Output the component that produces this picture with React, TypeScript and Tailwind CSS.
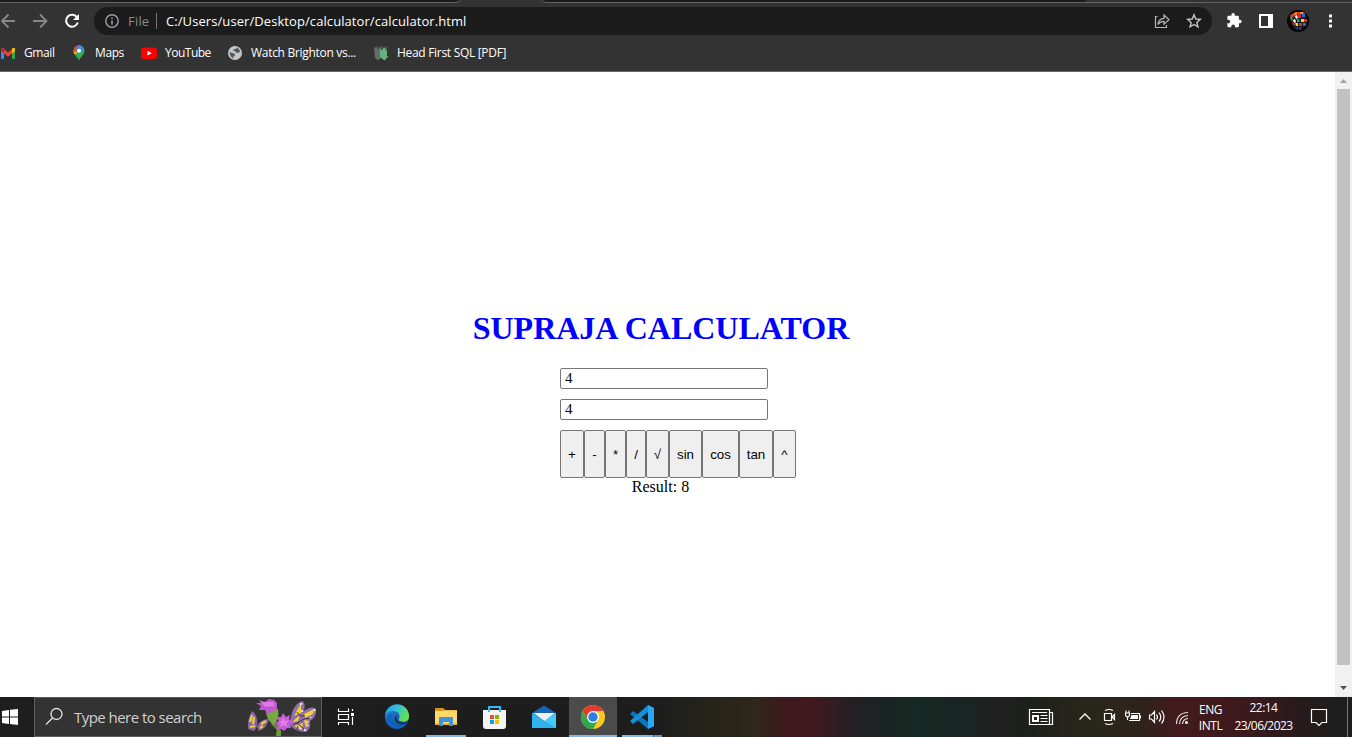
import type { ReactNode } from 'react';

const ui = "font-['Open_Sans','Noto_Sans',sans-serif]";

function Ico({ w, h, className = '', children }: { w: number; h: number; className?: string; children: ReactNode }) {
  return (
    <svg width={w} height={h} viewBox={`0 0 ${w} ${h}`} fill="none" className={`shrink-0 ${className}`}>
      {children}
    </svg>
  );
}

function TabStrip() {
  return (
    <div className="flex h-[5px] shrink-0 bg-[#333333]">
      <Ico w={1352} h={5}>
        <path d="M0 0H460Q459 2 456 2H0Z" fill="#1c1c1c" />
        <path d="M542 0H1087Q1086 2 1083 2H547Q543 2 542 0Z" fill="#1c1c1c" />
        <path d="M0 2.5H455Q459 2.500 460 0M542 0Q543 2.500 547 2.500H1352" stroke="#626262" />
      </Ico>
    </div>
  );
}

function Toolbar() {
  return (
    <div className="flex h-8 shrink-0 items-center">
      <Ico w={94} h={32}>
        <path d="M15 16H2.500M8.500 9.500L2 16L8.500 22.500" stroke="#888888" strokeWidth="1.800" />
        <path d="M33 16H46M40 9.500L46.500 16L40 22.500" stroke="#888888" strokeWidth="1.800" />
        <path d="M77.200 12.600A6 6 0 1 0 77.800 17.500" stroke="#fff" strokeWidth="2" />
        <path d="M79 9V15H73Z" fill="#fff" />
      </Ico>
      <div className="flex h-7 w-[1118px] shrink-0 items-center rounded-full bg-[#1b1b1b] pl-[11px] pr-[10px]">
        <Ico w={14} h={14}>
          <circle cx="7" cy="7" r="6.200" stroke="#9aa0a6" strokeWidth="1.400" />
          <path d="M7 6.200V10.500M7 3.500V5" stroke="#9aa0a6" strokeWidth="1.500" />
        </Ico>
        <span className="ml-[9px] w-[28px] whitespace-nowrap pt-px text-[13px] tracking-[0.2px] text-[#8b8b8b]">File</span>
        <div className="h-4 w-px bg-[#777]" />
        <span className="ml-[9px] flex-1 whitespace-nowrap pt-px text-[13px] tracking-[0.08px] text-white">C:/Users/user/Desktop/calculator/calculator.html</span>
        <Ico w={16} h={16} className="mr-4">
          <path d="M3.500 3.500H1.500V14.500H12.500V12" stroke="#b5b5b5" strokeWidth="1.200" />
          <path d="M4 11.500C4.500 7.500 7 5.500 10 5.400V2L15 6.800L10 11.200V8.300C7.500 8.300 5.500 9.300 4 11.500Z" stroke="#b5b5b5" strokeWidth="1.200" />
        </Ico>
        <Ico w={16} h={16}>
          <path d="M8 1.800L9.800 6L14.300 6.400L10.900 9.400L11.900 13.800L8 11.500L4.100 13.800L5.100 9.400L1.700 6.400L6.200 6Z" stroke="#c8c8c8" strokeWidth="1.400" />
        </Ico>
      </div>
      <Ico w={140} h={32}>
        <g transform="translate(14 7.300) scale(.68)">
          <path d="M20.500 11H19V7c0-1.100-.9-2-2-2h-4V3.500a2.500 2.500 0 0 0-5 0V5H4c-1.100 0-2 .9-2 2v3.800h1.500a2.700 2.700 0 0 1 0 5.400H2V20c0 1.100.9 2 2 2h3.800v-1.500a2.700 2.700 0 0 1 5.400 0V22H17c1.100 0 2-.9 2-2v-4h1.500a2.500 2.500 0 0 0 0-5z" fill="#fff" />
        </g>
        <path d="M47 9H61V23H47ZM49 11V21H56V11Z" fill="#fff" fillRule="evenodd" />
        <circle cx="86" cy="16" r="11" fill="#050505" />
        <g transform="translate(86 16)">
          <path d="M-8 -4L0 -8L7 -7L9 4L2 9L-5 7Z" fill="#1a1a1a" />
          <path d="M-8 -6L-2 -9L6 -9L7 -7L-1 -6L-7 -3Z" fill="#e8352c" />
          <path d="M-4 -8L-1 -9V-7L-4 -6ZM2 -9H5V-7H2Z" fill="#f08a1f" />
          <path d="M-3 -5L-1 -6L0 -3L-2 -2ZM-5 -1L-3 -2L-2 1L-4 2Z" fill="#fff" />
          <path d="M-8 -4L-6 -5L-5 -1L-7 0ZM-1 -2L1 -2L2 1L-1 1Z" fill="#20a455" />
          <path d="M0 -6H3V-3H0ZM-6 1L-4 2L-3 5L-5 4ZM6 -2H9V1H6ZM1 2H4V5H1Z" fill="#e8252c" />
          <path d="M3 -2H6V1H3ZM-3 2L0 2V5L-2 5Z" fill="#ffd21f" />
          <path d="M4 -7H7V-4H4ZM5 2H8V5H5Z" fill="#2469dc" />
          <path d="M-3 6H0V9L-2 8ZM1 6H4L3 9H1Z" fill="#163f86" />
        </g>
        <path d="M117 9.500H120V12.500H117ZM117 14.500H120V17.500H117ZM117 19.500H120V22.500H117Z" fill="#fff" />
      </Ico>
    </div>
  );
}

function Bookmarks() {
  const label = 'whitespace-nowrap pb-px text-[12px] text-white';
  return (
    <div className="flex h-[35px] shrink-0 items-center border-b border-[#6a6a6a] pb-[2px]">
      <Ico w={16} h={16}>
        <path d="M1 3H4V14H2Q1 14 1 13Z" fill="#4285f4" />
        <path d="M12 3H15V13Q15 14 14 14H12Z" fill="#34a853" />
        <path d="M4 4L8 7.500L12 4V8.500L8 11.800L4 8.500Z" fill="#ea4335" />
        <path d="M1 3.500Q2.500 2 4 4V8.500L1 6Z" fill="#c5221f" />
        <path d="M15 3.500Q13.500 2 12 4V8.500L15 6Z" fill="#fbbc04" />
      </Ico>
      <span className={`ml-2 w-[47px] tracking-[-0.4px] ${label}`}>Gmail</span>
      <Ico w={16} h={16}>
        <path d="M8 16C7.500 12.500 2.500 10.500 2.500 5.800A5.500 5.500 0 0 1 13.500 5.800C13.500 10.500 8.500 12.500 8 16Z" fill="#34a853" />
        <path d="M4 9.800Q2.500 8 2.500 5.800L4 2.300L8.500 4.600Z" fill="#fbbc04" />
        <path d="M3.200 3.300Q4.500 1.200 6.400.6L8.500 3.500L4.500 7.500Q2 6 3.200 3.300Z" fill="#ea4335" />
        <path d="M6.200.7Q10.500-.8 13 3.500L8.500 8.500L5 5.500Z" fill="#4285f4" />
        <circle cx="8" cy="5.700" r="2" fill="#fff" />
      </Ico>
      <span className={`ml-2 w-[46px] tracking-[-0.4px] ${label}`}>Maps</span>
      <Ico w={16} h={16}>
        <rect x="0" y="2.500" width="16" height="11.500" rx="3" fill="#ff0000" />
        <path d="M6.500 5.800L10.800 8.200L6.500 10.600Z" fill="#fff" />
      </Ico>
      <span className={`ml-2 w-[62px] tracking-[-0.5px] ${label}`}>YouTube</span>
      <Ico w={16} h={16}>
        <circle cx="8" cy="8" r="7" fill="#c4c7ca" />
        <path d="M9.500 2.500Q12.500 3.500 13.200 6.500L11 8L9 7.500L8 6L6 5.500L7 4L9 4ZM2.500 7L5 8L7.500 8.500L8 10.500L6.500 11.500V13.500Q3 12 2.500 7Z" fill="#55595d" />
      </Ico>
      <span className={`ml-2 w-[122px] tracking-[-0.3px] ${label}`}>Watch Brighton vs...</span>
      <Ico w={16} h={16}>
        <path d="M1 3L3 2L5 4L8 1V13L5 15.500L1 12H2Z" fill="#696969" />
        <path d="M7 4L9 5L11 2L13 4L14 3V11H15.500L11.500 15.500L7 12Z" fill="#61b57c" />
        <path d="M4.500 1V5M9 .5V5M13.500 1V6" stroke="#4a5f52" strokeWidth="1.300" />
      </Ico>
      <span className={`ml-2 tracking-[-0.3px] ${label}`}>Head First SQL [PDF]</span>
    </div>
  );
}

const keys: [string, string][] = [
  ['+', 'w-6'],
  ['-', 'w-[21px]'],
  ['*', 'w-[21px]'],
  ['/', 'w-5'],
  ['√', 'w-[23px]'],
  ['sin', 'w-[33px]'],
  ['cos', 'w-[37px]'],
  ['tan', 'w-[34px]'],
  ['^', 'w-[23px]'],
];

function Calculator() {
  const field = "h-[21px] w-[208px] rounded-[2px] border border-[#767676] bg-white px-[4px] font-['Liberation_Serif',serif] text-[15px] leading-[19px] text-black outline-none";
  return (
    <main className="flex flex-1 flex-col bg-white pt-[238px] font-['Liberation_Serif',serif] text-black">
      <h1 className="w-[1322px] text-center text-[32px] font-bold leading-[37px] text-[#0000ff]">SUPRAJA CALCULATOR</h1>
      <div className="mt-[21px] flex flex-col gap-[10px] pl-[560px]">
        <input className={field} defaultValue="4" />
        <input className={field} defaultValue="4" />
        <div className="flex">
          {keys.map(([k, w]) => (
            <button key={k} className={`${w} flex h-12 shrink-0 items-center justify-center rounded-[2px] border border-[#767676] bg-[#efefef] pt-[2px] font-['Liberation_Sans',sans-serif] text-[13.333px]`}>
              {k}
            </button>
          ))}
        </div>
      </div>
      <p className="w-[1321px] text-center text-[16px] leading-[18px]">Result: 8</p>
    </main>
  );
}

function Scrollbar() {
  return (
    <div className="flex w-[17px] shrink-0 flex-col items-center bg-[#f1f1f1]">
      <Ico w={17} h={17}>
        <path d="M5 11H12L8.500 7Z" fill="#a3a3a3" />
      </Ico>
      <div className="h-[576px] w-[13px] bg-[#c1c1c1]" />
      <Ico w={17} h={17} className="mt-[15px]">
        <path d="M5 6H12L8.500 10Z" fill="#505050" />
      </Ico>
    </div>
  );
}

function Flower() {
  return (
    <Ico w={72} h={38}>
      <path d="M26 20Q28 27 33 30L33 38H29L30 32L24 26Z" fill="#5d8f32" />
      <path d="M19 13L31 11Q33 20 27 27Q19 22 19 13Z" fill="#78a941" />
      <path d="M30 32H34V38H29Z" fill="#6a9a3a" />
      <path d="M9 5L14 5L12 2L18 4L22 1L27 2L30 5L30 11L25 14L20 16L18 12L12 12L14 8Z" fill="#c057d0" />
      <path d="M14 4L26 4L28 8L18 9Z" fill="#df79e8" />
      <path d="M5 13Q0 22 1 31L7 33Q11 29 10 22Q9 15 5 13Z" fill="#8668a5" />
      <path d="M22 21Q13 21 10 29L12 33Q20 30 22 21Z" fill="#8668a5" />
      <path d="M5 17L3 24M7 19L6 26M3 29L8 28M19 23L14 26M13 30L16 28" stroke="#f0ce35" strokeWidth="2.200" />
      <path d="M43 27Q44 7 55 3Q59 4 57 13Q65 7 69 11Q70 19 63 23Q64 31 59 34Q48 34 43 27Z" fill="#9070ac" />
      <path d="M47 18L54 5L54 15ZM57 16L67 11L66 16L58 20ZM45 24L53 17L51 23ZM47 28L56 25L55 32ZM57 22L62 23L59 30Z" fill="#f3cf39" />
      <path d="M50 14L53 18L58 18M46 27L57 21L63 20M50 25L57 31M51 28L50 32" stroke="#40314f" strokeWidth="1" />
      <path d="M54 5V7M67 11L68 13M61 27V28M57 32H59M63 20L64 19M55 12V14M53 30V31" stroke="#fff" strokeWidth="1.500" />
      <path d="M36 15L39 19L43 17L42 21L46 24L43 26L44 30L40 30L37 33L34 31L29 32L31 28L28 25L32 23L29 19L34 19Z" fill="#c85bd7" />
      <path d="M36 19L38 23L42 22L39 26L41 29L36 27L33 29L34 25L31 23L35 23Z" fill="#e57fe8" />
    </Ico>
  );
}

function Taskbar() {
  return (
    <footer className="flex h-10 shrink-0 items-stretch bg-[linear-gradient(90deg,#1e1e1e_0px,#1d1d1d_660px,#25251a_710px,#302619_755px,#3d1a1e_785px,#401920_815px,#251f22_850px,#1b2322_880px,#162923_915px,#182522_960px,#202020_1000px,#1d201d_1025px,#29271a_1090px,#30221a_1145px,#421b1d_1175px,#3c191c_1250px,#281a1c_1300px,#1b1f20_1352px)]">
      <Ico w={34} h={40}>
        <path d="M2 14L9 13V19.500H2ZM10 12.800L18 12V19.500H10ZM2 20.500H9V27L2 26ZM10 20.500H18V28L10 27Z" fill="#fff" />
      </Ico>
      <div className="flex w-[288px] shrink-0 items-center border border-[#5e5e5e] bg-[#333333]">
        <Ico w={39} h={38}>
          <circle cx="21.500" cy="16" r="5.500" stroke="#e5e5e5" strokeWidth="1.300" />
          <path d="M17.500 20L11 26.500" stroke="#e5e5e5" strokeWidth="1.300" />
        </Ico>
        <span className="w-[173px] shrink-0 whitespace-nowrap text-[15px] tracking-[-0.54px] text-[#d0d0d0]">Type here to search</span>
        <Flower />
      </div>
      <Ico w={50} h={40}>
        <path d="M16.500 11.500V14.500H26.500V11.500M16.500 28V25.500H26.500V28M16.500 17.500H26.500V22.500H16.500ZM30.500 12V14M30.500 20V28" stroke="#fff" strokeWidth="1.200" />
        <path d="M29 16H32V19H29Z" fill="#fff" />
      </Ico>
      <Ico w={54} h={40}>
        <defs>
          <linearGradient id="eg" x1="0" y1="0" x2="1" y2=".4">
            <stop stopColor="#2298df" />
            <stop offset=".5" stopColor="#32c0dc" />
            <stop offset="1" stopColor="#68dc55" />
          </linearGradient>
          <linearGradient id="eb" x1="0" y1="0" x2=".5" y2="1">
            <stop stopColor="#258ce0" />
            <stop offset="1" stopColor="#0c4fa5" />
          </linearGradient>
        </defs>
        <circle cx="25" cy="20" r="12" fill="url(#eb)" />
        <path d="M13 19C14 4 35 3 37 18C38 24 33 26 28 24C25 23 29 21 27 17C24 12 15 14 13 19Z" fill="url(#eg)" />
        <path d="M26 18C24 19 23 23 27 25Q32 27 36 24.500Q33 27.500 29 27C22 26 21 19 26 18Z" fill="#1e1e1e" />
        <path d="M21 17C15 23 22 32 34 27Q29 33 22 31C12 28 14 17 21 17Z" fill="#1262b7" />
      </Ico>
      <div className="flex w-10 flex-col border-b-2 border-[#76b9ed]">
        <Ico w={40} h={38}>
          <path d="M9 11H17L19 13H31V28H9Z" fill="#f5bd3d" />
          <path d="M9 11H17L19 13L17 14H9Z" fill="#d69518" />
          <path d="M9 14H31V28H9Z" fill="#ffd96b" />
          <path d="M9 26.500H31V28H9Z" fill="#e5a92f" />
          <path d="M13 20H27V29H23V25H17V29H13Z" fill="#3f95d9" />
        </Ico>
      </div>
      <Ico w={52} h={40}>
        <path d="M17 13H40V29Q40 32 37 32H20Q17 32 17 29Z" fill="#f4f4f4" />
        <path d="M23 15V10H34V15" stroke="#38b7f1" strokeWidth="2" />
        <path d="M24 18H28V22H24Z" fill="#f05024" />
        <path d="M29 18H33V22H29Z" fill="#7fba00" />
        <path d="M24 23H28V27H24Z" fill="#00a4ef" />
        <path d="M29 23H33V27H29Z" fill="#ffb900" />
      </Ico>
      <Ico w={51} h={40}>
        <path d="M14 16L26 8.500L38 16V31H14Z" fill="#1266b3" />
        <path d="M14 16L26 24L38 16V31H14Z" fill="#41cdf7" />
        <path d="M14 16L38 31H14Z" fill="#30b2ed" />
        <path d="M15.500 16H37L26.500 24Z" fill="#f1f1f1" />
      </Ico>
      <div className="flex w-12 flex-col border-b-2 border-[#76b9ed] bg-[#4b4b4b]">
        <Ico w={48} h={38}>
          <circle cx="24" cy="20" r="12" fill="#fdc921" />
          <path d="M13.600 14A12 12 0 0 1 34.400 14H24L18.800 23Z" fill="#e33b2e" />
          <path d="M13.600 14L18.800 23L29.200 23L24 32A12 12 0 0 1 13.600 14Z" fill="#2da94f" />
          <circle cx="24" cy="20" r="6" fill="#fff" />
          <circle cx="24" cy="20" r="4.700" fill="#2b7de9" />
        </Ico>
      </div>
      <div className="ml-[5px] flex w-10 flex-col">
        <Ico w={40} h={38}>
          <path d="M26 8L32 11V29L26 32L8 17L11 14L26 25Z" fill="#0877bc" />
          <path d="M26 8V15L11 27L8 24Z" fill="#168fd7" />
          <path d="M26 8L32 11V29L26 32Z" fill="#2aa7f2" />
        </Ico>
        <div className="flex h-[2px]">
          <div className="w-[31px] bg-[#76b9ed]" />
          <div className="w-px bg-[#41657f]" />
          <div className="w-2 bg-[#6495ba]" />
        </div>
      </div>
      <div className="flex-1" />
      <Ico w={170} h={40} className="mr-[3px]">
        <path d="M7.500 12.500H27.500V27.500H7.500ZM27.500 15.500H30.500V27.500H27.500M10 15.500H25M18.500 18.500H25.500M18.500 21.500H25.500M18.500 24.500H25.500" stroke="#fff" strokeWidth="1.200" />
        <path d="M10 18H17V25H10ZM12 20V23H15V20Z" fill="#fff" fillRule="evenodd" />
        <path d="M57.500 22.500L63 17L68.500 22.500" stroke="#fff" strokeWidth="1.300" />
        <path d="M82.500 16.500H89.500V23.500H82.500ZM90 20L92.500 17.500V22.500ZM83 13.500Q87 11.500 91 13.500M83 26.500Q87 28.500 91 26.500" stroke="#fff" strokeWidth="1.200" />
        <path d="M109 16.500H117.500V23.500H107M118.500 18.500V21.500M103.500 16H107.500V18.500L105.500 20.500L103.500 18.500ZM104 13.500V16M107 13.500V16M105.500 20V23" stroke="#fff" strokeWidth="1.100" />
        <path d="M109.500 18H116V22H108Z" fill="#fff" />
        <path d="M127.500 18H129.500L132.500 14.500V25.500L129.500 22H127.500ZM134.500 17.500Q136.500 20 134.500 22.500M137 15.500Q140.500 20 137 24.500M139.500 13.500Q144.500 20 139.500 26.500" stroke="#fff" strokeWidth="1.200" />
        <path d="M154.500 27Q154.500 16 166 15.500M157.500 27Q158 19 166 18.500M160.500 27Q161 22 166 21.500" stroke="#ddd" strokeWidth="1.200" />
        <circle cx="164.500" cy="25.500" r="1.500" fill="#fff" />
      </Ico>
      <div className="flex w-[31px] flex-col items-center justify-center whitespace-nowrap pt-px text-[12px] leading-[16px] tracking-[-0.45px] text-white">
        <span>ENG</span>
        <span>INTL</span>
      </div>
      <div className="ml-[3px] mr-px flex w-[69px] flex-col items-center justify-center whitespace-nowrap text-[12px] leading-[18px] tracking-[-0.55px] text-white">
        <span>22:14</span>
        <span>23/06/2023</span>
      </div>
      <Ico w={53} h={40}>
        <path d="M12.500 12.500H27.500V25.500H23L20 28.500L17 25.500H12.500Z" stroke="#fff" strokeWidth="1.200" />
        <path d="M48.500 0V40" stroke="#777" />
      </Ico>
    </footer>
  );
}

export default function App() {
  return (
    <div className={`flex h-[737px] w-[1352px] flex-col overflow-hidden bg-[#333333] ${ui}`}>
      <TabStrip />
      <Toolbar />
      <Bookmarks />
      <div className="flex min-h-0 flex-1">
        <Calculator />
        <Scrollbar />
      </div>
      <Taskbar />
    </div>
  );
}
